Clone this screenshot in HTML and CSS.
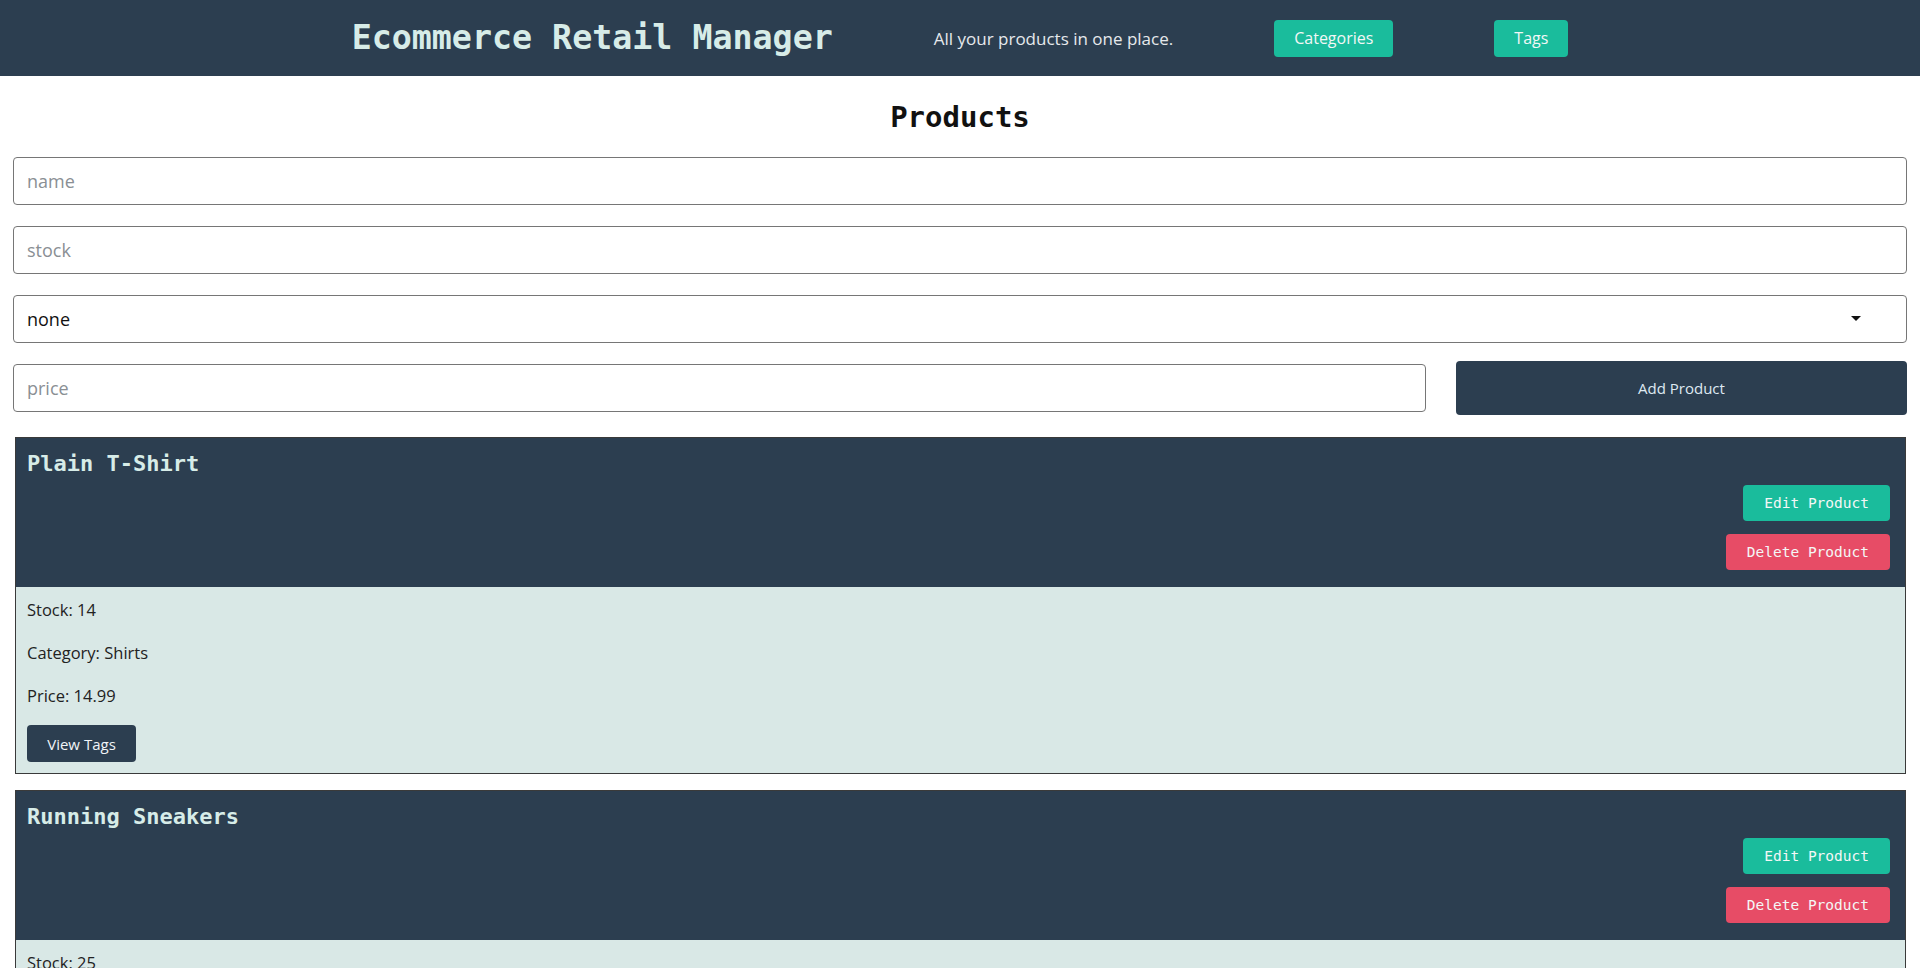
FILE: index.html
```html
<!DOCTYPE html>
<html lang="en">
<head>
<meta charset="utf-8">
<title>Ecommerce Retail Manager</title>
<link rel="stylesheet" href="styles.css">
</head>
<body>
<header class="topbar">
  <h1 class="brand">Ecommerce Retail Manager</h1>
  <p class="tagline">All your products in one place.</p>
  <a class="nav-btn" href="#">Categories</a>
  <a class="nav-btn" href="#">Tags</a>
</header>
<main class="page">
  <h2 class="page-title">Products</h2>
  <form class="product-form">
    <input class="field" type="text" placeholder="name">
    <input class="field" type="text" placeholder="stock">
    <div class="select-wrap">
      <select class="field select">
        <option>none</option>
      </select>
      <span class="caret"></span>
    </div>
    <div class="price-row">
      <input class="field price" type="text" placeholder="price">
      <button class="add-btn" type="button">Add Product</button>
    </div>
  </form>
  <section class="cards">
    <article class="card">
      <div class="card-head">
        <h3 class="card-title">Plain T-Shirt</h3>
        <div class="card-actions">
          <button class="act edit" type="button">Edit Product</button>
          <button class="act delete" type="button">Delete Product</button>
        </div>
      </div>
      <div class="card-body">
        <p>Stock: 14</p>
        <p>Category: Shirts</p>
        <p>Price: 14.99</p>
        <button class="tags-btn" type="button">View Tags</button>
      </div>
    </article>
    <article class="card">
      <div class="card-head">
        <h3 class="card-title">Running Sneakers</h3>
        <div class="card-actions">
          <button class="act edit" type="button">Edit Product</button>
          <button class="act delete" type="button">Delete Product</button>
        </div>
      </div>
      <div class="card-body">
        <p>Stock: 25</p>
        <p>Category: Shoes</p>
        <p>Price: 90</p>
        <button class="tags-btn" type="button">View Tags</button>
      </div>
    </article>
  </section>
</main>
</body>
</html>
```
FILE: styles.css
```css
* { box-sizing: border-box; }
body {
  margin: 0;
  font-family: "Open Sans", "Noto Sans", sans-serif;
  color: #212529;
  background: #fff;
}
.topbar {
  height: 76px;
  background: #2c3e50;
  display: flex;
  align-items: center;
  justify-content: center;
  gap: 101px;
}
.brand {
  margin: 0 0 2px;
  font-family: "DejaVu Sans Mono", monospace;
  font-size: 33.3px;
  font-weight: bold;
  color: #d7ece8;
}
.tagline {
  margin: 0;
  font-size: 17px;
  color: #e6e9ec;
}
.nav-btn {
  display: flex;
  align-items: center;
  justify-content: center;
  height: 37px;
  padding: 0 20px;
  background: #1abc9c;
  color: #f2f7f6;
  text-decoration: none;
  font-size: 16px;
  border-radius: 4px;
}
.page {
  padding: 0 13px;
}
.page-title {
  margin: 24px 0 23px;
  text-align: center;
  font-family: "DejaVu Sans Mono", monospace;
  font-size: 29px;
  line-height: 34px;
  font-weight: bold;
  color: #111;
}
.product-form {
  display: flex;
  flex-direction: column;
  gap: 21px;
}
.field {
  width: 100%;
  height: 48px;
  border: 1px solid #767676;
  border-radius: 4px;
  padding: 0 13px;
  font-family: "Open Sans", sans-serif;
  font-size: 18px;
  color: #111;
  background: #fff;
  outline: none;
}
.field::placeholder { color: #8a8f94; }
.select-wrap { position: relative; }
.select {
  appearance: none;
  -webkit-appearance: none;
}
.caret {
  position: absolute;
  right: 46px;
  top: 21px;
  width: 0;
  height: 0;
  border-left: 5px solid transparent;
  border-right: 5px solid transparent;
  border-top: 5px solid #111;
  pointer-events: none;
}
.price-row {
  display: flex;
  align-items: center;
  gap: 30px;
  margin-top: -3px;
}
.price { flex: 1; }
.add-btn {
  width: 451px;
  height: 54px;
  border: none;
  border-radius: 4px;
  background: #2c3e50;
  color: #dfe9f2;
  font-family: "Open Sans", sans-serif;
  font-size: 15px;
}
.cards {
  margin: 22px 1px 0 2px;
  display: flex;
  flex-direction: column;
  gap: 16px;
}
.card {
  border: 1px solid #3a3a3a;
}
.card-head {
  background: #2c3e50;
  height: 149px;
  padding: 13px 15px 17px 11px;
  display: flex;
  flex-direction: column;
}
.card-title {
  margin: 0;
  font-family: "DejaVu Sans Mono", monospace;
  font-size: 22px;
  line-height: 26px;
  font-weight: bold;
  color: #d7ece8;
}
.card-actions {
  margin-top: 8px;
  display: flex;
  flex-direction: column;
  align-items: flex-end;
  gap: 13px;
}
.act {
  height: 36px;
  border: none;
  border-radius: 4px;
  padding: 0 21px;
  font-family: "DejaVu Sans Mono", monospace;
  font-size: 14.5px;
  color: #f4f7f6;
}
.edit { background: #1abc9c; }
.delete { background: #e74c66; }
.card-body {
  background: #d9e8e6;
  padding: 10px 11px 11px;
}
.card-body p {
  margin: 0 0 17px;
  font-size: 16.5px;
  line-height: 26px;
  color: #222;
}
.card-body p:last-of-type { margin-bottom: 16px; }
.tags-btn {
  display: block;
  width: 109px;
  height: 37px;
  border: none;
  border-radius: 4px;
  background: #2c3e50;
  color: #f0f4f7;
  font-family: "Open Sans", sans-serif;
  font-size: 15px;
}
```
